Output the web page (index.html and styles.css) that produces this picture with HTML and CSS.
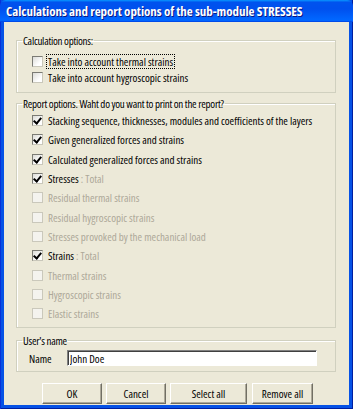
FILE: index.html
```html
<!DOCTYPE html>
<html lang="en">
<head>
    <meta charset="UTF-8">
    <title>Calculations and report options of the sub-module STRESSES</title>
    <link rel="stylesheet" href="styles.css">
</head>
<body>
    <div class="window">
        <div class="titlebar">Calculations and report options of the sub-module STRESSES</div>
        <div class="client">
            <fieldset class="group calc">
                <legend>Calculation options:</legend>
                <div class="row"><span class="box"></span><span class="label focus">Take into account thermal strains</span></div>
                <div class="row"><span class="box"></span><span class="label">Take into account hygroscopic strains</span></div>
            </fieldset>

            <fieldset class="group report">
                <legend>Report options. Waht do you want to print on the report?</legend>
                <div class="row"><span class="box checked"></span><span class="label">Stacking sequence, thicknesses, modules and coefficients of the layers</span></div>
                <div class="row"><span class="box checked"></span><span class="label">Given generalized forces and strains</span></div>
                <div class="row"><span class="box checked"></span><span class="label">Calculated generalized forces and strains</span></div>
                <div class="row"><span class="box checked"></span><span class="label">Stresses<span class="muted"> : Total</span></span></div>
                <div class="row disabled"><span class="box"></span><span class="label">Residual thermal strains</span></div>
                <div class="row disabled"><span class="box"></span><span class="label">Residual hygroscopic strains</span></div>
                <div class="row disabled"><span class="box"></span><span class="label">Stresses provoked by the mechanical load</span></div>
                <div class="row"><span class="box checked"></span><span class="label">Strains<span class="muted"> : Total</span></span></div>
                <div class="row disabled"><span class="box"></span><span class="label">Thermal strains</span></div>
                <div class="row disabled"><span class="box"></span><span class="label">Hygroscopic strains</span></div>
                <div class="row disabled"><span class="box"></span><span class="label">Elastic strains</span></div>
            </fieldset>

            <fieldset class="group user">
                <legend>User's name</legend>
                <div class="name-row">
                    <span class="name-label">Name</span>
                    <input class="name-input" type="text" value="John Doe">
                </div>
            </fieldset>

            <div class="buttons">
                <button class="btn ok">OK</button>
                <button class="btn cancel">Cancel</button>
                <button class="btn select">Select all</button>
                <button class="btn remove">Remove all</button>
            </div>
        </div>
    </div>
</body>
</html>
```

FILE: styles.css
```css
body {
    margin: 0;
    font-family: "Open Sans", "Liberation Sans", sans-serif;
    font-stretch: 75%;
    font-size: 11px;
}

.window {
    width: 353px;
    height: 409px;
    box-sizing: border-box;
    padding: 0 4px 4px 4px;
    background-color: #0652e6;
    box-shadow: inset 1px 0 #0831d9, inset -1px 0 #001ea0, inset 0 -1px #001ea0;
    display: flex;
    flex-direction: column;
}

.titlebar {
    height: 22px;
    margin: 0 -4px;
    padding-left: 6px;
    line-height: 22px;
    color: white;
    font-weight: bold;
    font-size: 13px;
    letter-spacing: -0.05px;
    text-shadow: 1px 1px #0a1883;
    background: linear-gradient(#0997ff 0%, #0053ee 10%, #0050ee 40%, #0066ff 88%, #0066ff 93%, #005bff 95%, #003dd7 100%);
    border-radius: 6px 6px 0 0;
}

.client {
    flex: 1;
    background-color: #ece9d8;
    padding: 12px 13px 0 12px;
}

.group {
    min-width: 0;
    margin: 0;
    padding: 0 5px;
    border: 1px solid #d0d0bf;
    box-shadow: inset 1px 1px #fff;
}

.group legend {
    padding: 0 1px;
    line-height: 13px;
    letter-spacing: -0.25px;
}

.calc {
    padding-top: 6px;
    padding-bottom: 7px;
}

.calc .row {
    height: 16px;
}

.report {
    margin-top: 4px;
    padding-top: 1px;
    padding-bottom: 4px;
}

.report .row {
    height: 19.3px;
}

.row {
    display: flex;
    align-items: center;
    padding-left: 10px;
}

.box {
    width: 11px;
    height: 11px;
    box-sizing: border-box;
    border: 1px solid #7b7b74;
    border-right-color: #c9c7ba;
    border-bottom-color: #c9c7ba;
    background: linear-gradient(135deg, #dcdcd7, #fff 70%);
    flex-shrink: 0;
    position: relative;
}

.box.checked::after {
    content: "";
    position: absolute;
    left: 2px;
    top: 0;
    width: 3px;
    height: 6px;
    border: solid #000;
    border-width: 0 2px 2px 0;
    transform: rotate(40deg);
}

.label {
    margin-left: 3px;
    padding: 0 1px;
    line-height: 13px;
    border: 1px solid transparent;
    white-space: nowrap;
}

.label.focus {
    border: 1px dotted #000;
}

.muted {
    color: #aca899;
}

.disabled .label {
    color: #aca899;
}

.disabled .box {
    border-color: #cac8bb;
    background: #f4f3ee;
}

.user {
    margin-top: 6px;
    padding-top: 3px;
    padding-bottom: 5px;
}

.name-row {
    display: flex;
    align-items: center;
    padding-left: 7px;
}

.name-label {
    width: 38px;
}

.name-input {
    width: 250px;
    height: 16px;
    box-sizing: border-box;
    margin: 0;
    padding: 0 2px;
    font: inherit;
    border: 1px solid #808080;
    border-right-color: #fff;
    border-bottom-color: #fff;
    box-shadow: inset 1px 1px #404040;
    background: #fff;
    outline: none;
}

.buttons {
    display: flex;
    gap: 4px;
    margin-top: 11px;
    padding-left: 26px;
}

.btn {
    height: 21px;
    margin: 0;
    padding: 0;
    font: inherit;
    color: #000;
    background: #ece9d8;
    border: 1px solid #fff;
    border-right-color: #716f64;
    border-bottom-color: #716f64;
    box-shadow: inset -1px -1px #aca899;
}

.ok, .cancel {
    width: 60px;
}

.select {
    width: 77px;
}

.remove {
    width: 61px;
    margin-left: 1px;
}
```
